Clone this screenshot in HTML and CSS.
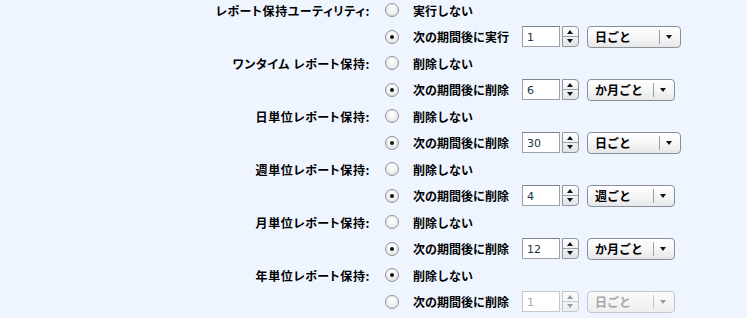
FILE: index.html
```html
<!DOCTYPE html>
<html lang="ja">
<head>
    <meta charset="UTF-8">
    <title>レポート保持</title>
    <link rel="stylesheet" href="styles.css">
</head>
<body>
    <div class="settings">
        <!-- レポート保持ユーティリティ -->
        <div class="row">
            <div class="label">レポート保持ユーティリティ:</div>
            <input type="radio" class="radio" name="util">
            <div class="option">実行しない</div>
        </div>
        <div class="row tall">
            <div class="label"></div>
            <input type="radio" class="radio" name="util" checked>
            <div class="option">次の期間後に実行</div>
            <div class="spin">
                <div class="spin-input">1</div>
                <div class="spin-btns"><span class="up"></span><span class="down"></span></div>
            </div>
            <div class="select wide"><span class="select-text">日ごと</span><span class="select-arrow"></span></div>
        </div>

        <div class="row">
            <div class="label">ワンタイム レポート保持:</div>
            <input type="radio" class="radio" name="once">
            <div class="option">削除しない</div>
        </div>
        <div class="row tall">
            <div class="label"></div>
            <input type="radio" class="radio" name="once" checked>
            <div class="option">次の期間後に削除</div>
            <div class="spin">
                <div class="spin-input">6</div>
                <div class="spin-btns"><span class="up"></span><span class="down"></span></div>
            </div>
            <div class="select"><span class="select-text">か月ごと</span><span class="select-arrow"></span></div>
        </div>

        <div class="row">
            <div class="label">日単位レポート保持:</div>
            <input type="radio" class="radio" name="day">
            <div class="option">削除しない</div>
        </div>
        <div class="row tall">
            <div class="label"></div>
            <input type="radio" class="radio" name="day" checked>
            <div class="option">次の期間後に削除</div>
            <div class="spin">
                <div class="spin-input">30</div>
                <div class="spin-btns"><span class="up"></span><span class="down"></span></div>
            </div>
            <div class="select wide"><span class="select-text">日ごと</span><span class="select-arrow"></span></div>
        </div>

        <div class="row">
            <div class="label">週単位レポート保持:</div>
            <input type="radio" class="radio" name="week">
            <div class="option">削除しない</div>
        </div>
        <div class="row tall">
            <div class="label"></div>
            <input type="radio" class="radio" name="week" checked>
            <div class="option">次の期間後に削除</div>
            <div class="spin">
                <div class="spin-input">4</div>
                <div class="spin-btns"><span class="up"></span><span class="down"></span></div>
            </div>
            <div class="select"><span class="select-text">週ごと</span><span class="select-arrow"></span></div>
        </div>

        <div class="row">
            <div class="label">月単位レポート保持:</div>
            <input type="radio" class="radio" name="month">
            <div class="option">削除しない</div>
        </div>
        <div class="row tall">
            <div class="label"></div>
            <input type="radio" class="radio" name="month" checked>
            <div class="option">次の期間後に削除</div>
            <div class="spin">
                <div class="spin-input">12</div>
                <div class="spin-btns"><span class="up"></span><span class="down"></span></div>
            </div>
            <div class="select"><span class="select-text">か月ごと</span><span class="select-arrow"></span></div>
        </div>

        <div class="row">
            <div class="label">年単位レポート保持:</div>
            <input type="radio" class="radio" name="year" checked>
            <div class="option">削除しない</div>
        </div>
        <div class="row tall">
            <div class="label"></div>
            <input type="radio" class="radio" name="year">
            <div class="option">次の期間後に削除</div>
            <div class="spin disabled">
                <div class="spin-input">1</div>
                <div class="spin-btns"><span class="up"></span><span class="down"></span></div>
            </div>
            <div class="select disabled"><span class="select-text">日ごと</span><span class="select-arrow"></span></div>
        </div>
    </div>
</body>
</html>
```

FILE: styles.css
```css
:root {
    --bg: #eef5ff;
    --text: #000;
    --border: #9aa1a9;
    --disabled: #a8a8a8;
}

body {
    margin: 0;
    background-color: var(--bg);
    font-family: "Noto Sans CJK JP", "Liberation Sans", sans-serif;
    color: var(--text);
    font-size: 12px;
    font-weight: bold;
}

.settings {
    margin-top: -3px;
}

.row {
    display: flex;
    align-items: center;
    height: 26px;
}

.row.tall {
    height: 27px;
}

.label {
    width: 370px;
    text-align: right;
    font-feature-settings: "palt";
    letter-spacing: 0.6px;
    white-space: nowrap;
}

.radio {
    appearance: none;
    -webkit-appearance: none;
    margin: 0 0 0 15px;
    width: 14px;
    height: 14px;
    border-radius: 50%;
    border: 1px solid #8e9297;
    background: radial-gradient(circle at 50% 35%, #ffffff 0%, #f2f2f2 45%, #d6d6d6 100%);
    box-sizing: border-box;
    position: relative;
}

.radio:checked::after {
    content: "";
    position: absolute;
    left: 4px;
    top: 4px;
    width: 4px;
    height: 4px;
    border-radius: 50%;
    background: #111;
}

.option {
    margin-left: 14px;
    width: 109px;
    white-space: nowrap;
}

.spin {
    display: flex;
    align-items: center;
    height: 22px;
}

.spin-input {
    width: 38px;
    height: 21px;
    box-sizing: border-box;
    background: #fff;
    border: 1px solid var(--border);
    border-top-color: #7c838b;
    font-family: "DejaVu Sans", sans-serif;
    font-weight: normal;
    font-size: 11px;
    color: #1b3442;
    padding: 4px 0 0 4px;
}

.spin-btns {
    margin-left: 2px;
    width: 17px;
    height: 21px;
    display: flex;
    flex-direction: column;
    border: 1px solid #8f959c;
    border-radius: 0 4px 4px 0;
    box-sizing: border-box;
    overflow: hidden;
    background: linear-gradient(#ffffff, #e2e4e7);
}

.spin-btns span {
    flex: 1;
    position: relative;
}

.spin-btns .up {
    border-bottom: 1px solid #9ba0a6;
}

.spin-btns span::after {
    content: "";
    position: absolute;
    left: 4px;
    top: 3px;
    border-left: 3.5px solid transparent;
    border-right: 3.5px solid transparent;
}

.spin-btns .up::after {
    border-bottom: 4px solid #111;
}

.spin-btns .down::after {
    top: 2px;
    border-top: 4px solid #111;
}

.select {
    margin-left: 8px;
    width: 88px;
    height: 22px;
    box-sizing: border-box;
    border: 1px solid #8a9097;
    border-radius: 4px;
    background: linear-gradient(#ffffff 0%, #f6f6f6 50%, #e6e7e9 100%);
    display: flex;
    align-items: center;
}

.select.wide {
    width: 94px;
}

.select-text {
    flex: 1;
    padding-left: 7px;
    white-space: nowrap;
}

.select-arrow {
    width: 20px;
    height: 14px;
    border-left: 1px solid #9a9fa5;
    position: relative;
}

.select-arrow::after {
    content: "";
    position: absolute;
    left: 6px;
    top: 5px;
    border-left: 3.5px solid transparent;
    border-right: 3.5px solid transparent;
    border-top: 4px solid #111;
}

/* 無効状態 */
.spin.disabled .spin-input {
    border-color: #c5c8cc;
    color: var(--disabled);
}

.spin.disabled .spin-btns,
.select.disabled {
    border-color: #c3c6ca;
    background: linear-gradient(#fbfbfb, #eceef0);
}

.spin.disabled .spin-btns .up {
    border-bottom-color: #c8ccd0;
}

.spin.disabled .up::after {
    border-bottom-color: #9a9a9a;
}

.spin.disabled .down::after,
.select.disabled .select-arrow::after {
    border-top-color: #9a9a9a;
}

.select.disabled .select-text {
    color: var(--disabled);
}

.select.disabled .select-arrow {
    border-left-color: #c3c6ca;
}
```
